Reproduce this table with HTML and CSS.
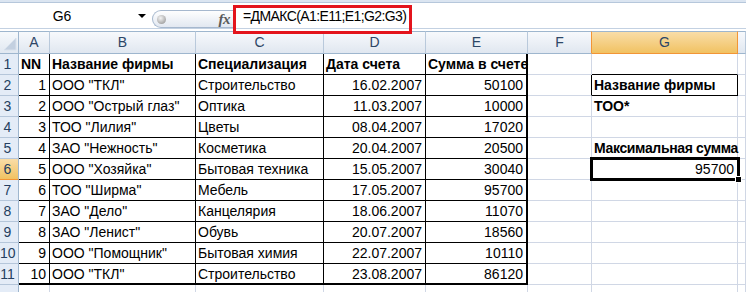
FILE: index.html
```html
<!DOCTYPE html>
<html lang="ru">
<head>
<meta charset="utf-8">
<title>ДМАКС</title>
<link rel="stylesheet" href="styles.css">
</head>
<body>
<div class="app">
  <div class="topstrip"></div>
  <div class="fbar">
    <div class="namebox"><span class="ref">G6</span><span class="ddarrow"></span></div>
    <div class="pill"><span class="knob"></span><span class="fx">fx</span></div>
    <div class="formula">=ДМАКС(A1:E11;E1;G2:G3)</div>
  </div>
  <div class="gap"></div>
  <div class="sheet">
    <div class="corner"><svg width="19" height="22" viewBox="0 0 19 22"><polygon points="4,18 16,18 16,6" fill="#c3d0e0" stroke="#d8e1ec" stroke-width="1"/></svg></div>
    <div class="ch">A</div><div class="ch">B</div><div class="ch">C</div><div class="ch">D</div><div class="ch">E</div><div class="ch pre">F</div><div class="ch sel">G</div><div class="ch"></div>

    <div class="rh">1</div><div class="c t b">NN</div><div class="c t b">Название фирмы</div><div class="c t b">Специализация</div><div class="c t b">Дата счета</div><div class="c t te b">Сумма в счете</div><div class="c"></div><div class="c bb"></div><div class="c"></div>

    <div class="rh">2</div><div class="c t r">1</div><div class="c t">ООО "ТКЛ"</div><div class="c t">Строительство</div><div class="c t r">16.02.2007</div><div class="c t te r">50100</div><div class="c brk"></div><div class="c box b">Название фирмы</div><div class="c"></div>

    <div class="rh">3</div><div class="c t r">2</div><div class="c t">ООО "Острый глаз"</div><div class="c t">Оптика</div><div class="c t r">11.03.2007</div><div class="c t te r">10000</div><div class="c"></div><div class="c b">ТОО*</div><div class="c"></div>

    <div class="rh">4</div><div class="c t r">3</div><div class="c t">ТОО "Лилия"</div><div class="c t">Цветы</div><div class="c t r">08.04.2007</div><div class="c t te r">17020</div><div class="c"></div><div class="c"></div><div class="c"></div>

    <div class="rh">5</div><div class="c t r">4</div><div class="c t">ЗАО "Нежность"</div><div class="c t">Косметика</div><div class="c t r">20.04.2007</div><div class="c t te r">20500</div><div class="c"></div><div class="c b tight">Максимальная сумма</div><div class="c"></div>

    <div class="rh sel">6</div><div class="c t r">5</div><div class="c t">ООО "Хозяйка"</div><div class="c t">Бытовая техника</div><div class="c t r">15.05.2007</div><div class="c t te r">30040</div><div class="c"></div><div class="c r active">95700</div><div class="c"></div>

    <div class="rh">7</div><div class="c t r">6</div><div class="c t">ТОО "Ширма"</div><div class="c t">Мебель</div><div class="c t r">17.05.2007</div><div class="c t te r">95700</div><div class="c"></div><div class="c"></div><div class="c"></div>

    <div class="rh">8</div><div class="c t r">7</div><div class="c t">ЗАО "Дело"</div><div class="c t">Канцелярия</div><div class="c t r">18.06.2007</div><div class="c t te r">11070</div><div class="c"></div><div class="c"></div><div class="c"></div>

    <div class="rh">9</div><div class="c t r">8</div><div class="c t">ЗАО "Ленист"</div><div class="c t">Обувь</div><div class="c t r">20.07.2007</div><div class="c t te r">18560</div><div class="c"></div><div class="c"></div><div class="c"></div>

    <div class="rh">10</div><div class="c t r">9</div><div class="c t">ООО "Помощник"</div><div class="c t">Бытовая химия</div><div class="c t r">22.07.2007</div><div class="c t te r">10110</div><div class="c"></div><div class="c"></div><div class="c"></div>

    <div class="rh">11</div><div class="c t tb r">10</div><div class="c t tb">ООО "ТКЛ"</div><div class="c t tb">Строительство</div><div class="c t tb r">23.08.2007</div><div class="c t te tb r">86120</div><div class="c"></div><div class="c"></div><div class="c"></div>

    <div class="rh"></div><div class="c"></div><div class="c"></div><div class="c"></div><div class="c"></div><div class="c"></div><div class="c"></div><div class="c"></div><div class="c"></div>
  </div>
  <div class="redbox"></div>
</div>
</body>
</html>
```

FILE: styles.css
```css
*, *::before, *::after { box-sizing: border-box; margin: 0; padding: 0; }
html, body { width: 746px; height: 292px; overflow: hidden; background: #fff; }
body { font-family: "Liberation Sans", Arial, sans-serif; font-size: 14px; color: #000; }

.app { position: relative; width: 746px; height: 292px; overflow: hidden; background: #fff; }

.topstrip { height: 3px; background: #dbe5f1; border-bottom: 1px solid #b6c7db; }

.fbar { display: flex; align-items: center; height: 26px; border-bottom: 1px solid #c3d1e2; }
.namebox { display: flex; align-items: center; width: 152px; height: 100%; }
.ref { width: 124px; text-align: center; font-size: 14px; }
.ddarrow { width: 0; height: 0; margin-left: 14px; border-left: 4px solid transparent; border-right: 4px solid transparent; border-top: 4px solid #000; }

.pill { display: flex; align-items: center; align-self: flex-end; width: 81px; height: 18px; border: 1px solid #a6b8ce; border-right: none; border-radius: 9px 0 0 9px; background: linear-gradient(#fefefe, #e2e8f1); }
.knob { width: 9px; height: 9px; margin-left: 4px; border-radius: 50%; background: radial-gradient(circle at 40% 35%, #f4f4f4, #a9a9a9 70%, #8c8c8c); }
.fx { margin-left: auto; margin-right: 3px; font-family: "Liberation Serif", serif; font-style: italic; font-weight: bold; font-size: 15px; color: #5b5b5b; letter-spacing: -0.5px; line-height: 16px; }

.formula { flex: 1; padding-left: 10px; font-size: 14px; letter-spacing: -0.6px; }

.gap { height: 2px; }

.sheet { display: grid; grid-template-columns: 19px 31px 146px 128px 102px 102px 64px 146px 1fr; grid-template-rows: 23px repeat(12, 21px); }

.corner { background: linear-gradient(#f6f9fc, #e1e8f1); border-top: 1px solid #9eb6ce; border-right: 1px solid #9eb6ce; border-bottom: 1px solid #9eb6ce; }
.corner svg { display: block; }

.ch { background: linear-gradient(#f7f9fc, #e0e7f0); border-top: 1px solid #9eb6ce; border-right: 1px solid #b9c9db; border-bottom: 1px solid #9eb6ce; text-align: center; line-height: 21px; color: #2d4666; }
.ch.pre { border-right-color: #f29536; }
.ch.sel { background: linear-gradient(#f9dda8, #f1c262); border-right-color: #f29536; border-bottom-color: #f29536; }

.rh { background: #e4ecf7; border-right: 1px solid #9eb6ce; border-bottom: 1px solid #b5c6da; color: #253f61; text-align: center; padding-right: 3px; line-height: 20px; }
.rh.sel { background: linear-gradient(#f9dda8, #f1c262); border-bottom-color: #f29536; }

.c { border-right: 1px solid #d0d7e5; border-bottom: 1px solid #d0d7e5; padding: 0 3px 0 2px; line-height: 20px; white-space: nowrap; overflow: visible; }
.c.r { text-align: right; }
.c.b { font-weight: bold; }
.c.tight { letter-spacing: -0.35px; }
.c.t { border-color: #000; }
.c.te { border-right: 2px solid #000; }
.c.tb { border-bottom: 2px solid #000; }
.c.bb { border-bottom-color: #000; }
.c.brk { border-right-color: #000; }
.c.box { border-right-color: #000; border-bottom-color: #000; }

.active { position: relative; z-index: 2; }
.active::after { content: ""; position: absolute; left: -2px; top: -2px; right: -3px; bottom: -2px; border: 3px solid #000; }
.active::before { content: ""; position: absolute; right: -5px; bottom: -4px; width: 7px; height: 7px; background: #000; border: 1px solid #fff; z-index: 1; }

.redbox { position: absolute; left: 233px; top: 5px; width: 179px; height: 29px; border: 3px solid #e3141c; z-index: 5; }
```
